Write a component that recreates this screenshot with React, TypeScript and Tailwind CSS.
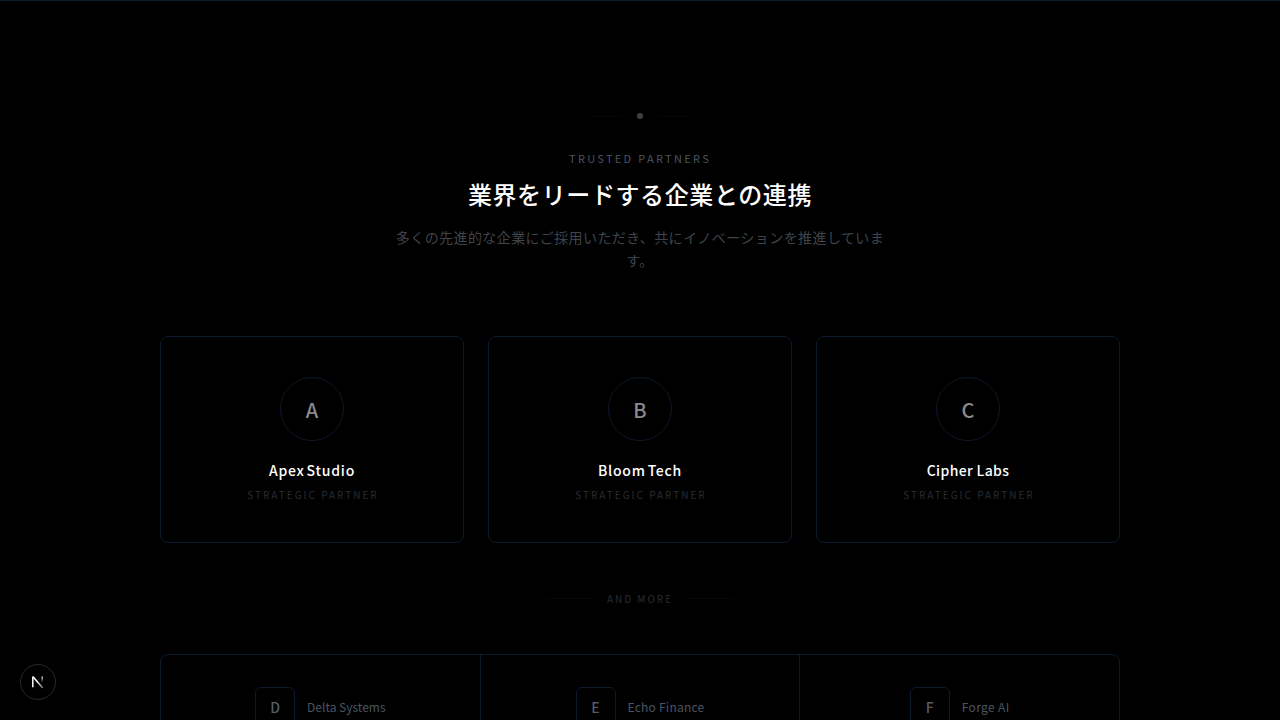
const featured = [
  { letter: "A", name: "Apex Studio", nameStyle: "tracking-[0.055em] [word-spacing:-2px]" },
  { letter: "B", name: "Bloom Tech", nameStyle: "tracking-[0.055em] [word-spacing:-2px]" },
  { letter: "C", name: "Cipher Labs", nameStyle: "tracking-[0.025em]" },
];

const others = [
  { letter: "D", name: "Delta Systems", nameStyle: "" },
  { letter: "E", name: "Echo Finance", nameStyle: "tracking-[0.02em]" },
  { letter: "F", name: "Forge AI", nameStyle: "tracking-[0.03em]" },
];

export default function App() {
  return (
    <div className="h-[720px] overflow-hidden bg-black border-t border-[#0d1a2b] font-['Noto_Sans_CJK_JP','Noto_Sans',sans-serif]">
      <main className="mx-auto w-[960px] pt-[112px]">
        {/* Heading */}
        <header className="flex flex-col items-center text-center">
          <div className="flex items-center gap-[15px]">
            <span className="w-8 h-px bg-[#04070d]" />
            <span className="w-[6px] h-[6px] rounded-full bg-[#404040]" />
            <span className="w-8 h-px bg-[#04070d]" />
          </div>
          <p className="mt-[31px] text-[11px] leading-[16px] tracking-[0.21em] text-[#4b5563]">TRUSTED PARTNERS</p>
          <h2 className="mt-[12px] text-2xl leading-[32px] font-medium tracking-[0.025em] text-white">
            業界をリードする企業との連携
          </h2>
          <p className="mt-[16px] w-[500px] text-sm leading-[23px] tracking-[0.03em] text-[#3f444b]">
            多くの先進的な企業にご採用いただき、共にイノベーションを推進しています。
          </p>
        </header>

        {/* Featured partners */}
        <section className="mt-[64px] grid grid-cols-3 gap-6">
          {featured.map((partner) => (
            <div
              key={partner.name}
              className="flex flex-col items-center h-[207px] pt-10 border border-[#0d1a2b] rounded-lg"
            >
              <div className="flex items-center justify-center w-16 h-16 pt-[2px] rounded-full border border-[#0c1828] text-xl font-medium text-[#8a8a90]">
                {partner.letter}
              </div>
              <div className={`mt-[19px] text-sm leading-5 font-medium text-white ${partner.nameStyle}`}>
                {partner.name}
              </div>
              <div className="mt-[7px] pl-[2px] text-[10px] leading-[15px] tracking-[0.2em] text-[#2a2d33]">
                STRATEGIC PARTNER
              </div>
            </div>
          ))}
        </section>

        <div className="mt-[48px] flex items-center justify-center gap-3">
          <span className="w-12 h-px bg-[#04070d]" />
          <span className="text-[10px] leading-[15px] tracking-[0.2em] text-[#2a2d33]">AND MORE</span>
          <span className="w-12 h-px bg-[#04070d]" />
        </div>

        {/* Other partners */}
        <section className="mt-[48px] grid grid-cols-3 gap-px bg-[#0d1a2b] border border-[#0d1a2b] rounded-lg overflow-hidden">
          {others.map((partner) => (
            <div key={partner.name} className="flex items-center justify-center gap-3 py-8 bg-black">
              <div className="flex items-center justify-center w-10 h-10 rounded-md border border-[#0d1a2b] text-sm font-medium text-[#565c66]">
                {partner.letter}
              </div>
              <span className={`text-xs text-[#4b5563] ${partner.nameStyle}`}>{partner.name}</span>
            </div>
          ))}
        </section>
      </main>

      {/* Next.js dev indicator */}
      <div className="fixed left-5 bottom-5 flex items-center justify-center w-9 h-9 rounded-full bg-black border border-[#2a2a2a]">
        <svg width="16" height="16" viewBox="0 0 16 16" fill="none">
          <defs>
            <linearGradient id="n-diag" x1="7" y1="7" x2="13" y2="14" gradientUnits="userSpaceOnUse">
              <stop stopColor="white" />
              <stop offset="1" stopColor="white" stopOpacity="0.4" />
            </linearGradient>
            <linearGradient id="n-bar" x1="12" y1="2.5" x2="12" y2="8" gradientUnits="userSpaceOnUse">
              <stop stopColor="white" />
              <stop offset="1" stopColor="white" stopOpacity="0.1" />
            </linearGradient>
          </defs>
          <path d="M2.8 13.2V2.6" stroke="white" strokeWidth="1.5" />
          <path d="M3 2.8L12.8 14" stroke="url(#n-diag)" strokeWidth="1.6" />
          <path d="M12.2 2.6v5.6" stroke="url(#n-bar)" strokeWidth="1.3" />
        </svg>
      </div>
    </div>
  );
}
